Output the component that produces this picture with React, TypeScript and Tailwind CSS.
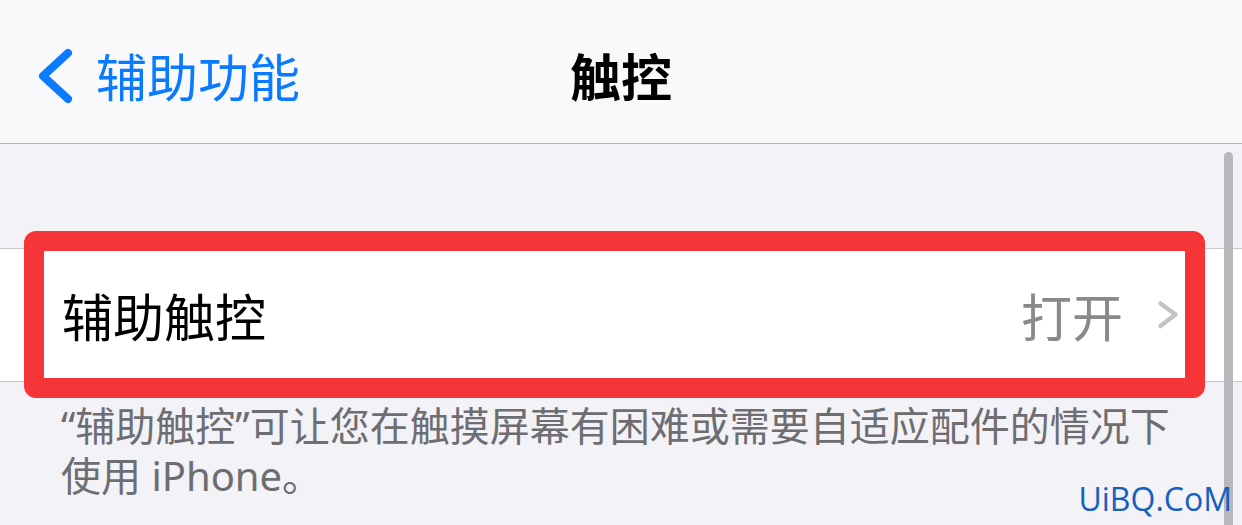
export default function App() {
  return (
    <div className="relative w-[1242px] h-[525px] overflow-hidden bg-[#f2f2f7] font-['Noto_Sans_CJK_SC',sans-serif]">
      {/* nav bar */}
      <div className="grid grid-cols-[1fr_auto_1fr] items-center h-[144px] pt-[6px] bg-[#f9f9fb] border-b border-[#b4b4b8]">
        <div className="flex items-center pl-[36px]">
          <svg width="40" height="60" viewBox="0 0 40 60" fill="none" className="mt-[2px]">
            <path d="M32 7 L7 30 L32 53" stroke="#0a7aff" strokeWidth="8" strokeLinecap="round" strokeLinejoin="round" />
          </svg>
          <span className="ml-[20px] text-[51px] leading-[60px] text-[#0a7aff]">辅助功能</span>
        </div>
        <h1 className="text-[51px] leading-[60px] font-bold text-black">触控</h1>
        <div />
      </div>

      <div className="h-[104px]" />

      {/* row */}
      <div className="relative flex items-center h-[134px] pl-[62px] pr-[62px] bg-white border-y border-[#c8c7cc]">
        <span className="text-[51px] leading-[60px] text-black">辅助触控</span>
        <span className="ml-auto text-[51px] leading-[60px] text-[#8a8a8e]">打开</span>
        <svg className="ml-[33px]" width="24" height="34" viewBox="0 0 24 34" fill="none">
          <path d="M4.5 5.5 L19.5 16.5 L4.5 28" stroke="#c4c4c7" strokeWidth="4.5" strokeLinecap="round" strokeLinejoin="round" />
        </svg>
        {/* highlight annotation */}
        <div className="absolute left-[24px] top-[-18px] w-[1181px] h-[167px] border-[20px] border-[#f63538] rounded-[12px]" />
      </div>

      <p className="pt-[19px] pl-[61px] pr-[50px] text-[40px] leading-[50px] text-[#6d6d72] font-['Noto_Sans','Noto_Sans_CJK_SC',sans-serif]">
        “辅助触控”可让您在触摸屏幕有困难或需要自适应配件的情况下使用 iPhone。
      </p>

      {/* scroll indicator */}
      <div className="absolute left-[1224px] top-[152px] w-[9px] h-[400px] rounded-full bg-[#b9b9bd]" />

      {/* watermark */}
      <div className="absolute right-[10px] bottom-[7px] text-[32px] leading-[38px] text-[#1560bd] font-['Open_Sans',sans-serif]">
        UiBQ.CoM
      </div>
    </div>
  );
}
